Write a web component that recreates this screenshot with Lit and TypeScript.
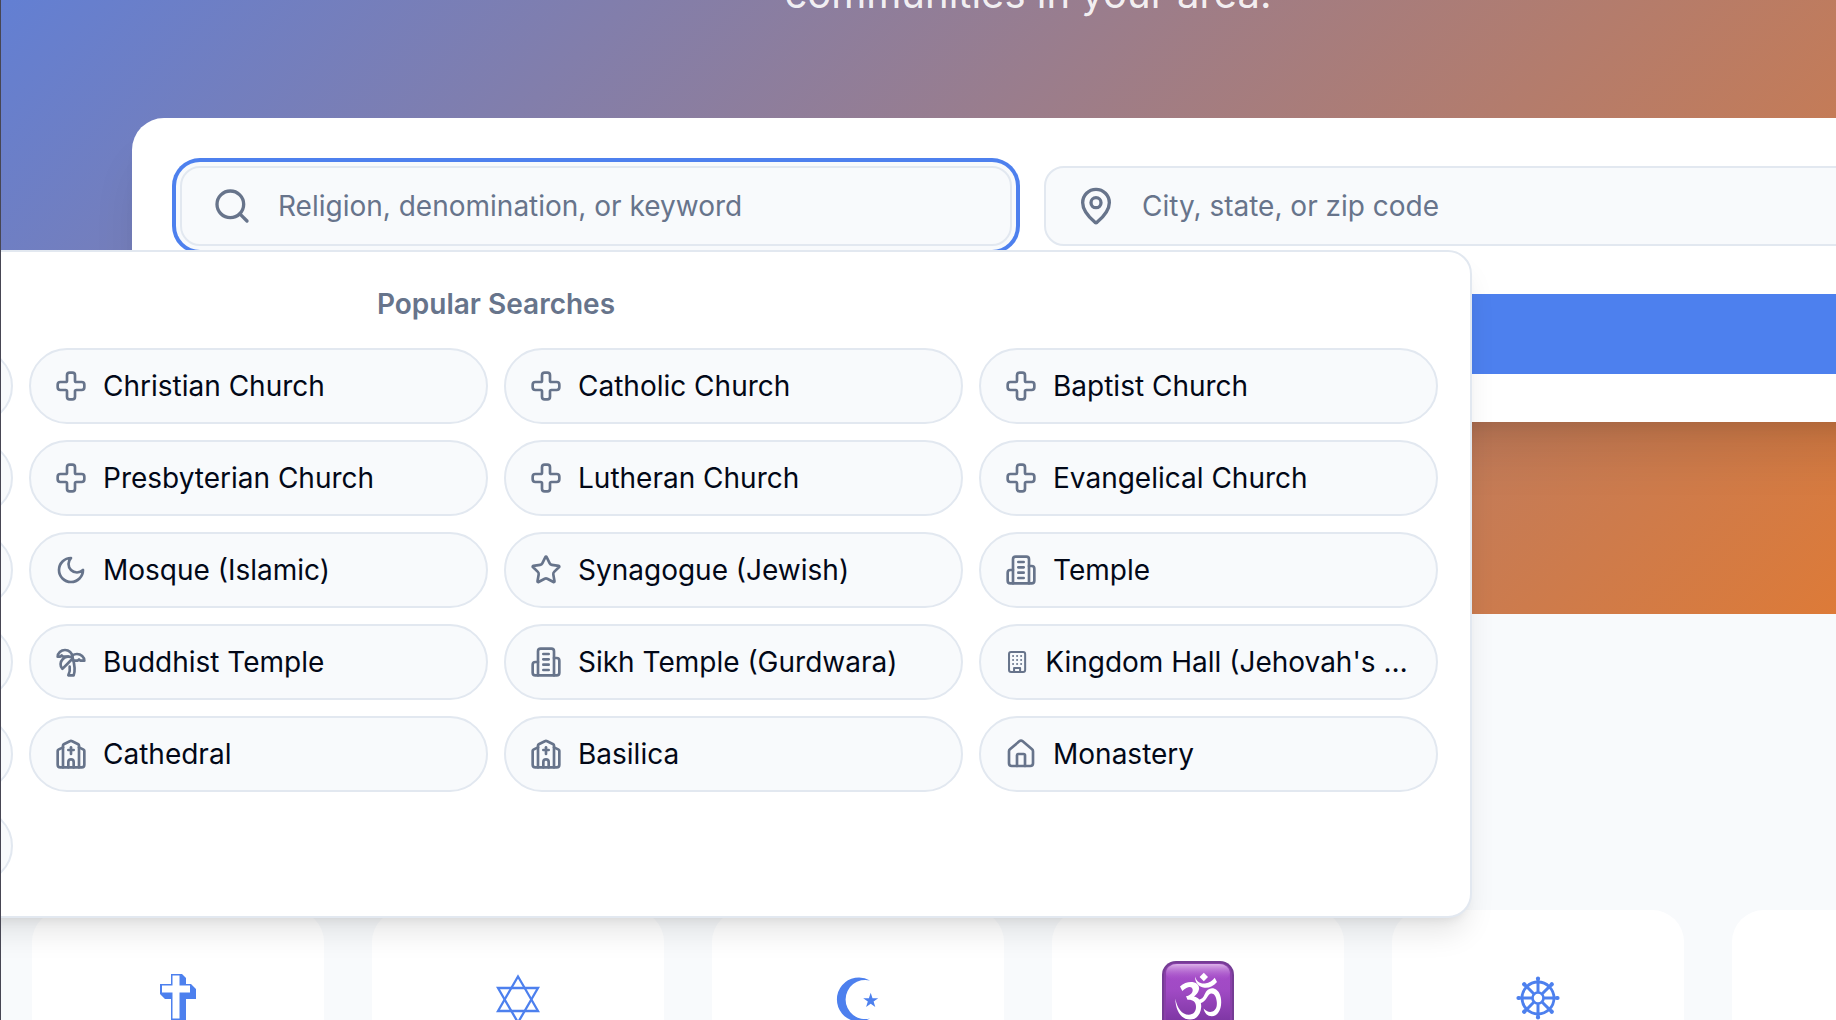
import { LitElement, html, css, svg, nothing } from "lit";
import type { SVGTemplateResult } from "lit";
import { customElement } from "lit/decorators.js";

const lineIcons: Record<string, SVGTemplateResult> = {
  search: svg`<circle cx="11" cy="11" r="8"/><path d="m21 21-4.3-4.3"/>`,
  pin: svg`<path d="M20 10c0 4.993-5.539 10.193-7.399 11.799a1 1 0 0 1-1.202 0C9.539 20.193 4 14.993 4 10a8 8 0 0 1 16 0"/><circle cx="12" cy="10" r="3"/>`,
  cross: svg`<path d="M4 9a2 2 0 0 0-2 2v2a2 2 0 0 0 2 2h4a1 1 0 0 1 1 1v4a2 2 0 0 0 2 2h2a2 2 0 0 0 2-2v-4a1 1 0 0 1 1-1h4a2 2 0 0 0 2-2v-2a2 2 0 0 0-2-2h-4a1 1 0 0 1-1-1V4a2 2 0 0 0-2-2h-2a2 2 0 0 0-2 2v4a1 1 0 0 1-1 1z"/>`,
  moon: svg`<path d="M12 3a6 6 0 0 0 9 9 9 9 0 1 1-9-9Z"/>`,
  star: svg`<path d="M11.525 2.295a.53.53 0 0 1 .95 0l2.31 4.679a2.123 2.123 0 0 0 1.595 1.16l5.166.756a.53.53 0 0 1 .294.904l-3.736 3.638a2.123 2.123 0 0 0-.611 1.878l.882 5.14a.53.53 0 0 1-.771.56l-4.618-2.428a2.122 2.122 0 0 0-1.973 0L6.396 21.01a.53.53 0 0 1-.77-.56l.881-5.139a2.122 2.122 0 0 0-.611-1.879L2.16 9.795a.53.53 0 0 1 .294-.906l5.165-.755a2.122 2.122 0 0 0 1.597-1.16z"/>`,
  towers: svg`<path d="M6 22V4a2 2 0 0 1 2-2h8a2 2 0 0 1 2 2v18Z"/><path d="M6 12H4a2 2 0 0 0-2 2v6a2 2 0 0 0 2 2h2"/><path d="M18 9h2a2 2 0 0 1 2 2v9a2 2 0 0 1-2 2h-2"/><path d="M10 6h4"/><path d="M10 10h4"/><path d="M10 14h4"/><path d="M10 18h4"/>`,
  palm: svg`<path d="M13 8c0-2.76-2.46-5-5.5-5S2 5.24 2 8h2l1-1 1 1h4"/><path d="M13 7.14A5.82 5.82 0 0 1 16.5 6c3.04 0 5.5 2.24 5.5 5h-3l-1-1-1 1h-3"/><path d="M5.89 9.71c-2.15 2.15-2.3 5.47-.35 7.43l4.24-4.25.7-.7.71-.71 2.12-2.12c-1.95-1.96-5.27-1.8-7.42.35"/><path d="M11 15.5c.5 2.5-.17 4.5-1 6.5h4c2-5.5-.5-12-1-14"/>`,
  building: svg`<rect width="16" height="20" x="4" y="2" rx="2" ry="2"/><path d="M9 22v-4h6v4"/><path d="M8 6h.01"/><path d="M16 6h.01"/><path d="M12 6h.01"/><path d="M12 10h.01"/><path d="M12 14h.01"/><path d="M16 10h.01"/><path d="M16 14h.01"/><path d="M8 10h.01"/><path d="M8 14h.01"/>`,
  church: svg`<path d="M10 9h4"/><path d="M12 7v5"/><path d="M14 22v-4a2 2 0 0 0-4 0v4"/><path d="M18 22V5.618a1 1 0 0 0-.553-.894l-4.553-2.277a2 2 0 0 0-1.788 0L6.553 4.724A1 1 0 0 0 6 5.618V22"/><path d="m18 7 3.447 1.724a1 1 0 0 1 .553.894V20a2 2 0 0 1-2 2H4a2 2 0 0 1-2-2V9.618a1 1 0 0 1 .553-.894L6 7"/>`,
  house: svg`<path d="M15 21v-8a1 1 0 0 0-1-1h-4a1 1 0 0 0-1 1v8"/><path d="M3 10a2 2 0 0 1 .709-1.528l7-5.999a2 2 0 0 1 2.582 0l7 5.999A2 2 0 0 1 21 10v9a2 2 0 0 1-2 2H5a2 2 0 0 1-2-2z"/>`,
};

const lineIcon = (name: string, cls: string) => html`<svg
  class=${cls} viewBox="0 0 24 24" fill="none" stroke="currentColor"
  stroke-width="2" stroke-linecap="round" stroke-linejoin="round" aria-hidden="true"
>${lineIcons[name]}</svg>`;

interface Suggestion { label: string; icon?: string; }

// Entries without an icon sit in the column past the window's left edge.
const suggestions: Suggestion[] = [
  { label: "Church" },
  { label: "Christian Church", icon: "cross" },
  { label: "Catholic Church", icon: "cross" },
  { label: "Baptist Church", icon: "cross" },
  { label: "Methodist Church" },
  { label: "Presbyterian Church", icon: "cross" },
  { label: "Lutheran Church", icon: "cross" },
  { label: "Evangelical Church", icon: "cross" },
  { label: "Pentecostal Church" },
  { label: "Mosque (Islamic)", icon: "moon" },
  { label: "Synagogue (Jewish)", icon: "star" },
  { label: "Temple", icon: "towers" },
  { label: "Hindu Temple" },
  { label: "Buddhist Temple", icon: "palm" },
  { label: "Sikh Temple (Gurdwara)", icon: "towers" },
  { label: "Kingdom Hall (Jehovah's Witnesses)", icon: "building" },
  { label: "Chapel" },
  { label: "Cathedral", icon: "church" },
  { label: "Basilica", icon: "church" },
  { label: "Monastery", icon: "house" },
  { label: "Shrine" },
];

const spokes = [0, 45, 90, 135, 180, 225, 270, 315];

const religions: { label: string; art?: SVGTemplateResult }[] = [
  {
    label: "Christianity",
    art: svg`<path fill="currentColor" d="M29 16H40L44 20V26H49L54 31V41H44V66H34L29 62V41H23L18 36V26H29Z"/>
      <path fill="#fff" d="M30.500 17.500H37.500V27.500H48V34.500H37.500V60.500H30.500V34.500H20V27.500H30.500Z"/>`,
  },
  {
    label: "Judaism",
    art: svg`<g fill="none" stroke="currentColor" stroke-width="2.300">
      <path d="M36 18.500 56 53H16Z"/><path d="M16 30H56L36 64.500Z"/></g>`,
  },
  {
    label: "Islam",
    art: svg`<path fill="currentColor" d="M48 22.500A22 22 0 1 0 48 60.500A19.600 19.600 0 1 1 48 22.500Z"/>
      <path fill="currentColor" d="M48.700 34.800 50.500 40.200H56.200L51.600 43.600 53.300 49 48.700 45.700 44.100 49 45.800 43.600 41.200 40.200H46.900Z"/>`,
  },
  {
    label: "Hinduism",
    art: svg`<defs>
        <linearGradient id="omFill" x1="0" y1="0" x2="0" y2="1">
          <stop offset="0" stop-color="#a64cc9"/><stop offset="0.400" stop-color="#a04ac4"/><stop offset="1" stop-color="#74319a"/>
        </linearGradient>
        <linearGradient id="omGloss" x1="0" y1="0" x2="0" y2="1">
          <stop offset="0" stop-color="#dcb3e8"/><stop offset="1" stop-color="#a64cc9" stop-opacity="0"/>
        </linearGradient>
      </defs>
      <rect x="0" y="3" width="72" height="72" rx="14" fill="#753c94"/>
      <rect x="2" y="5" width="68" height="68" rx="12" fill="#8a40aa"/>
      <rect x="4" y="6" width="64" height="66" rx="11" fill="url(#omFill)"/>
      <rect x="4" y="6" width="64" height="17" rx="11" fill="url(#omGloss)"/>
      <g fill="#fff">
        <path d="M18 28.500C22 25 27 23.500 31.500 24.300C36.500 25.300 38.300 29.500 36.300 33.500C35.300 35.600 33.700 37.200 32 38.600C37 39.500 39.500 43.500 39.200 49C38.800 56.500 34.500 61.600 28 61.600C19.500 61.600 13.500 53 13.300 40.500C15.200 50.500 20 56.800 26.800 56.700C31.500 56.600 34 53.400 34 48.700C34 44 31 41.500 25.500 41.800L24 38.300C28 37.600 30.800 35 30.700 31.800C30.500 28.200 26 27.500 20.300 33Z"/>
        <path d="M36.500 41.500C40 41.500 41.500 39 42.800 36C44.800 31.500 48.500 29.300 52.500 30.800C57 32.500 59.300 38 59.200 44.500C59 52.500 55.500 58.200 49.800 58.200C45.500 58.200 42.600 55.300 41.600 50.500C44.500 53.500 47.500 54.600 50.500 53.500C54 52.200 55.200 48.500 54.800 44C54.400 38.800 52 35.200 49 35.600C45.500 36 44.500 44.800 37.500 45.300Z"/>
        <path d="M33 18.500C34.500 23.500 38 26 43 25.500C47.500 25 50.500 22.500 52.700 19.800L55 24C51.500 28 47 30.300 42.500 29.700C36.500 29 33 24.500 33 18.500Z"/>
        <path d="M41.800 14.800 46 19 41.800 23.200 37.600 19Z"/>
      </g>`,
  },
  {
    label: "Buddhism",
    art: svg`<g fill="none" stroke="currentColor">
      <circle cx="36" cy="40" r="16" stroke-width="2.800"/>
      <circle cx="36" cy="40" r="5.500" stroke-width="2.600"/>
      ${spokes.map((a) => svg`<g transform="rotate(${a} 36 40)">
        <path d="M36 34V20" stroke-width="3"/><path d="M36 20.800V20.500" stroke-width="4.200" stroke-linecap="round"/></g>`)}
    </g>`,
  },
  { label: "Other faiths" },
];

@customElement("app-root")
export class AppRoot extends LitElement {
  static styles = css`
    :host {
      --primary: #4d80ee;
      --surface: #f8fafc;
      --line: #e2e8f0;
      --muted: #67748b;
      --ink: #020817;
      display: block;
      position: relative;
      height: 100vh;
      overflow: hidden;
      background: var(--surface);
      color: var(--ink);
      font: 400 28px/40px Inter, "Liberation Sans", sans-serif;
    }
    :host::after {
      content: "";
      position: absolute;
      inset: 0 auto 0 0;
      width: 1px;
      background: #474653;
      z-index: 20;
    }
    *, *::before, *::after { box-sizing: border-box; }
    .page { width: calc(100% + 220px); }
    .hero {
      margin-top: -426px;
      padding: 392px 32px 192px;
      background: linear-gradient(135deg, #4d80ee, #e87a2a);
    }
    .lead {
      margin: 0 0 96px;
      font-size: 40px;
      line-height: 56px;
      text-align: center;
      color: rgba(255, 255, 255, 0.9);
    }
    .search {
      display: grid;
      grid-template-columns: 1fr 1fr;
      gap: 48px 32px;
      max-width: 1792px;
      margin: 0 auto;
      padding: 48px;
      border-radius: 32px;
      background: #fff;
      box-shadow: 0 40px 50px -10px rgba(0, 0, 0, 0.1), 0 16px 20px -12px rgba(0, 0, 0, 0.1);
    }
    .slot { position: relative; }
    .field {
      display: flex;
      align-items: center;
      gap: 26px;
      height: 80px;
      padding: 0 30px;
      border: 2px solid var(--line);
      border-radius: 20px;
      background: var(--surface);
      color: var(--muted);
    }
    .focused { box-shadow: 0 0 0 4px var(--surface), 0 0 0 8px var(--primary); }
    .field-icon { flex: none; width: 40px; height: 40px; }
    .input {
      flex: 1;
      min-width: 0;
      padding: 0;
      border: 0;
      outline: 0;
      background: none;
      font: inherit;
      color: var(--ink);
    }
    .input::placeholder { color: var(--muted); opacity: 1; }
    .submit {
      grid-column: 1 / -1;
      height: 80px;
      border: 0;
      border-radius: 20px;
      background: var(--primary);
    }
    .menu {
      position: absolute;
      z-index: 10;
      top: calc(100% + 4px);
      left: -660px;
      width: 1952px;
      padding: 32px;
      border: 2px solid var(--line);
      border-radius: 24px;
      background: #fff;
      box-shadow: 0 20px 30px -6px rgba(0, 0, 0, 0.1), 0 8px 12px -8px rgba(0, 0, 0, 0.1);
    }
    .menu-title {
      margin: 0 0 24px;
      font-size: 28px;
      line-height: 40px;
      font-weight: 600;
      text-align: center;
      color: var(--muted);
    }
    .pills {
      display: grid;
      grid-template-columns: repeat(4, minmax(0, 1fr));
      gap: 16px;
    }
    .pill {
      display: flex;
      align-items: center;
      gap: 16px;
      min-height: 76px;
      padding: 16px 24px;
      border: 2px solid var(--line);
      border-radius: 38px;
      background: var(--surface);
      color: var(--ink);
      font: inherit;
      text-align: left;
    }
    .pill-icon { width: 32px; height: 32px; min-width: 0; color: var(--muted); }
    .pill-label {
      min-width: 0;
      overflow: hidden;
      text-overflow: ellipsis;
      white-space: nowrap;
    }
    .faiths {
      display: grid;
      grid-template-columns: repeat(6, 1fr);
      gap: 48px;
      padding: 296px 32px 96px;
    }
    .faith {
      display: flex;
      justify-content: center;
      min-height: 280px;
      padding: 48px;
      border-radius: 32px;
      background: #fff;
      color: var(--primary);
    }
    .faith-art { width: 72px; height: 80px; }
  `;

  render() {
    return html`
      <main class="page">
        <section class="hero">
          <p class="lead">communities in your area.</p>
          <form class="search" @submit=${(e: Event) => e.preventDefault()}>
            <div class="slot">
              <label class="field focused">
                ${lineIcon("search", "field-icon")}
                <input class="input" type="text" aria-label="Religion, denomination, or keyword" placeholder="Religion, denomination, or keyword" />
              </label>
              <div class="menu">
                <h2 class="menu-title">Popular Searches</h2>
                <div class="pills">
                  ${suggestions.map((s) => html`
                    <button class="pill" type="button" aria-label=${s.label}>
                      ${s.icon
                        ? html`${lineIcon(s.icon, "pill-icon")}<span class="pill-label">${s.label}</span>`
                        : nothing}
                    </button>`)}
                </div>
              </div>
            </div>
            <div class="slot">
              <label class="field">
                ${lineIcon("pin", "field-icon")}
                <input class="input" type="text" aria-label="City, state, or zip code" placeholder="City, state, or zip code" />
              </label>
            </div>
            <button class="submit" type="submit" aria-label="Search"></button>
          </form>
        </section>
        <nav class="faiths" aria-label="Religions">
          ${religions.map((r) => html`
            <a class="faith" href="#" aria-label=${r.label}>
              ${r.art ? html`<svg class="faith-art" viewBox="0 0 72 80" aria-hidden="true">${r.art}</svg>` : nothing}
            </a>`)}
        </nav>
      </main>
    `;
  }
}
